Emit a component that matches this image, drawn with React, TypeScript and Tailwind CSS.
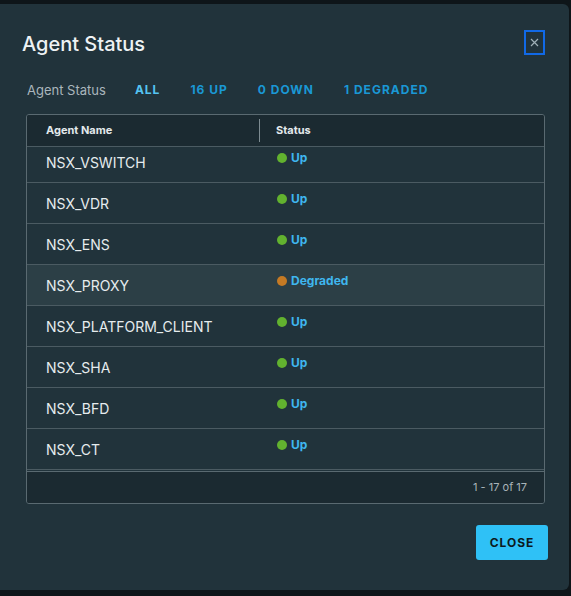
import React from 'react';

type Agent = { name: string; status: 'Up' | 'Degraded' };

const agents: Agent[] = [
  { name: 'NSX_VSWITCH', status: 'Up' },
  { name: 'NSX_VDR', status: 'Up' },
  { name: 'NSX_ENS', status: 'Up' },
  { name: 'NSX_PROXY', status: 'Degraded' },
  { name: 'NSX_PLATFORM_CLIENT', status: 'Up' },
  { name: 'NSX_SHA', status: 'Up' },
  { name: 'NSX_BFD', status: 'Up' },
  { name: 'NSX_CT', status: 'Up' },
];

const tabs = [
  { label: 'ALL', active: true },
  { label: '16 UP', active: false },
  { label: '0 DOWN', active: false },
  { label: '1 DEGRADED', active: false },
];

function StatusCell({ status }: { status: Agent['status'] }) {
  const dot = status === 'Up' ? 'bg-[#62b22f]' : 'bg-[#c57a24]';
  return (
    <div className="flex items-center gap-[4px] pt-[8px] leading-[16px]">
      <span className={`inline-block w-[10px] h-[10px] rounded-full ${dot}`} />
      <span className="text-[12px] font-bold text-[#3fb6ee]">{status}</span>
    </div>
  );
}

export default function App() {
  return (
    <div
      className="w-[571px] h-[596px] bg-[#0e1519] pt-[4px] overflow-hidden"
      style={{ fontFamily: 'Inter, "Noto Sans", sans-serif' }}
    >
      <div className="w-[569px] h-[586px] bg-[#21333b] rounded-r-[6px] pl-[26px] pr-[24px] pt-[26px]">
        {/* header */}
        <div className="flex justify-between items-start">
          <h2 className="-ml-[4px] text-[20px] leading-[28px] font-medium text-[#eef2f4]">Agent Status</h2>
          <button className="w-[21px] h-[25px] border-2 border-[#1169e6] flex items-center justify-center">
            <svg width="9" height="9" viewBox="0 0 9 9">
              <path d="M1 1 L8 8 M8 1 L1 8" stroke="#9fb0b7" strokeWidth="1.2" />
            </svg>
          </button>
        </div>

        {/* filters */}
        <div className="flex items-center mt-[24px] leading-[16px]">
          <span className="ml-[1px] mr-[29px] text-[13px] text-[#aab6bc]">Agent Status</span>
          <div className="flex gap-[30px]">
            {tabs.map((t) => (
              <span
                key={t.label}
                className={`text-[12px] font-bold tracking-[1px] ${t.active ? 'text-[#55c4f2]' : 'text-[#1a98d5]'}`}
              >
                {t.label}
              </span>
            ))}
          </div>
        </div>

        {/* table */}
        <div className="mt-[16px] w-[519px] border border-[#5a6a71] rounded-[3px] overflow-hidden">
          <div className="flex h-[32px] items-center bg-[#1b2a31] border-b border-[#4b5b62] text-[11px] font-bold text-[#e3e9ec]">
            <div className="w-[232px] pl-[19px]">Agent Name</div>
            <div className="h-[23px] w-px bg-[#7d8b91]" />
            <div className="pl-[16px]">Status</div>
          </div>

          <div className="h-[324px] overflow-hidden">
            <div className="-mt-[5px]">
              {agents.map((a) => (
                <div
                  key={a.name}
                  className={`flex h-[41px] border-b border-[#4b5b62] ${a.status === 'Degraded' ? 'bg-[#2c3f46]' : ''}`}
                >
                  <div className="w-[233px] pl-[19px] pt-[11px] text-[14px] leading-[20px] text-[#e6ecee]">{a.name}</div>
                  <div className="pl-[17px]">
                    <StatusCell status={a.status} />
                  </div>
                </div>
              ))}
            </div>
          </div>

          <div className="h-[32px] border-t border-[#5a6a71] bg-[#1b2a31] flex items-center justify-end pr-[17px]">
            <span className="text-[11px] text-[#a9b4b9]">1 - 17 of 17</span>
          </div>
        </div>

        {/* footer */}
        <div className="flex justify-end mt-[21px] -mr-[3px]">
          <button className="w-[72px] h-[35px] rounded-[3px] bg-[#2fc1f6] text-[12px] font-bold tracking-[1px] text-[#0c1a21]">
            CLOSE
          </button>
        </div>
      </div>
    </div>
  );
}
